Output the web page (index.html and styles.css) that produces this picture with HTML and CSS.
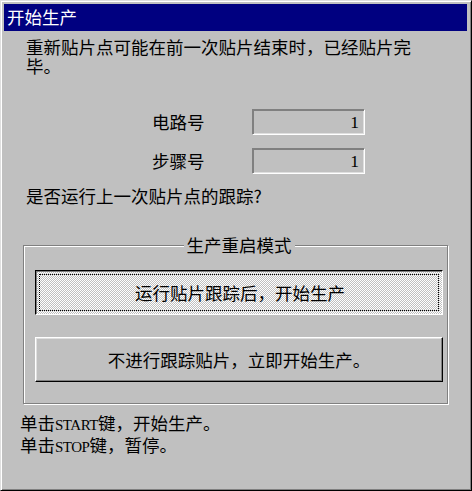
FILE: index.html
```html
<!DOCTYPE html>
<html lang="zh-CN">
<head>
	<meta charset="UTF-8">
	<title>开始生产</title>
	<link rel="stylesheet" href="styles.css">
</head>
<body>
	<div class="window">
		<div class="titlebar">开始生产</div>
		<p class="msg">重新贴片点可能在前一次贴片结束时，已经贴片完<br>毕。</p>
		<div class="fields">
			<div class="field">
				<span class="label">电路号</span>
				<span class="edit">1</span>
			</div>
			<div class="field">
				<span class="label">步骤号</span>
				<span class="edit">1</span>
			</div>
		</div>
		<p class="ask">是否运行上一次贴片点的跟踪?</p>
		<fieldset class="group">
			<legend>生产重启模式</legend>
			<button class="btn pressed">运行贴片跟踪后，开始生产</button>
			<button class="btn">不进行跟踪贴片，立即开始生产。</button>
		</fieldset>
		<p class="hint">单击<span class="latin">START</span>键，开始生产。<br>单击<span class="latin">STOP</span>键，暂停。</p>
	</div>
</body>
</html>
```

FILE: styles.css
```css
*{
	box-sizing: border-box;
}
body{
	margin: 0;
	font-family: "Noto Sans CJK SC", sans-serif;
	font-size: 17.5px;
	color: #000;
}
.window{
	width: 472px;
	height: 491px;
	background: #c0c0c0;
	border: 1px solid;
	border-color: #dfdfdf #000 #000 #dfdfdf;
	box-shadow: inset 1px 1px #fff, inset -1px -1px #808080;
	padding: 3px 4px 4px 3px;
}
.titlebar{
	height: 27px;
	line-height: 26px;
	background: #000080;
	color: #fff;
	padding-left: 3px;
}
.msg{
	margin: 6px 0 0 22px;
	line-height: 19px;
}
.fields{
	margin-top: 34px;
	padding-left: 148px;
	display: flex;
	flex-direction: column;
	gap: 13px;
}
.field{
	display: flex;
	align-items: center;
	height: 26px;
}
.label{
	width: 100px;
	line-height: 24px;
}
.edit{
	width: 113px;
	height: 26px;
	line-height: 24px;
	text-align: right;
	padding-right: 5px;
	font-family: "Liberation Serif", serif;
	border: 1px solid;
	border-color: #808080 #fff #fff #808080;
	box-shadow: inset 1px 1px #808080, inset -1px -1px #dfdfdf;
}
.ask{
	margin: 12px 0 0 22px;
	line-height: 19px;
}
.group{
	margin: 30px 0 0 19px;
	width: 425px;
	min-width: 0;
	padding: 15px 4px 21px 11px;
	border: 1px solid #808080;
	box-shadow: 1px 1px #fff, inset 1px 1px #fff;
	display: flex;
	flex-direction: column;
	gap: 22px;
}
.group legend{
	margin: 0 auto;
	padding: 0 3px;
	line-height: 20px;
	background: #c0c0c0;
}
.btn{
	height: 45px;
	padding: 0;
	font: inherit;
	color: #000;
	background: #c0c0c0;
	border: 1px solid;
	border-color: #fff #000 #000 #fff;
	box-shadow: inset -1px -1px #808080, inset 1px 1px #dfdfdf;
}
.btn.pressed{
	padding: 0 0 0 2px;
	border-color: #000 #fff #fff #000;
	box-shadow: inset 1px 1px #808080;
	background: repeating-conic-gradient(#fff 0 25%, #c0c0c0 0 50%) 0 0 / 2px 2px;
	outline: 1px dotted #000;
	outline-offset: -5px;
}
.hint{
	margin: 9px 0 0 16px;
	line-height: 19px;
}
.latin{
	font-family: "Liberation Serif", serif;
	font-size: 15px;
	letter-spacing: -0.5px;
}
```
